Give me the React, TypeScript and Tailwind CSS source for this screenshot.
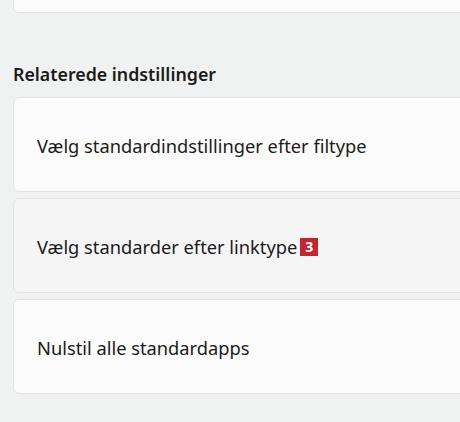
export default function App() {
  const items = [
    { label: 'Vælg standardindstillinger efter filtype', hover: false },
    { label: 'Vælg standarder efter linktype', hover: true, badge: '3' },
    { label: 'Nulstil alle standardapps', hover: false },
  ];

  return (
    <div
      className="h-[422px] w-[460px] overflow-hidden bg-[#f0f1f1] text-[#1b1b1b]"
      style={{ fontFamily: '"Noto Sans", "Open Sans", sans-serif' }}
    >
      <div className="pl-[13px]">
        <div className="mt-[-40px] h-[53px] w-[480px] rounded-md border border-[#e3e3e3] bg-[#fbfbfb]" />
      </div>

      <h2 className="mt-[49px] pl-[13px] text-[17.8px] font-semibold leading-[24px]">Relaterede indstillinger</h2>

      <div className="mt-[11px] flex flex-col gap-[6px] pl-[13px]">
        {items.map((item) => (
          <div
            key={item.label}
            className={
              'flex h-[95px] w-[480px] items-center rounded-md border border-[#e3e3e3] pl-[23px] pt-[2px] ' +
              (item.hover ? 'bg-[#f5f5f5]' : 'bg-[#fbfbfb]')
            }
          >
            <span className="text-[18.3px] leading-[24px]">{item.label}</span>
            {item.badge && (
              <span className="ml-[3px] flex h-[18px] w-[18px] items-center justify-center bg-[#c4252f] text-[14px] font-bold leading-none text-white">
                {item.badge}
              </span>
            )}
          </div>
        ))}
      </div>
    </div>
  );
}
